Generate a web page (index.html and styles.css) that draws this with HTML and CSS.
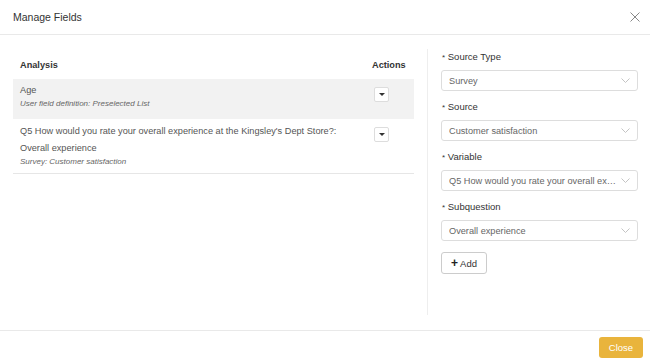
FILE: index.html
```html
<!DOCTYPE html>
<html lang="en">
<head>
    <meta charset="UTF-8">
    <meta name="viewport" content="width=device-width, initial-scale=1.0">
    <title>Manage Fields</title>
    <link rel="stylesheet" href="styles.css">
</head>
<body>
    <div class="modal">
        <div class="modal-header">
            <span class="modal-title">Manage Fields</span>
            <button class="close-x" aria-label="Close">
                <svg xmlns="http://www.w3.org/2000/svg" viewBox="0 0 10 10" width="10" height="10"><line x1="0.5" y1="0.5" x2="9.5" y2="9.5"></line><line x1="9.5" y1="0.5" x2="0.5" y2="9.5"></line></svg>
            </button>
        </div>
        <div class="modal-body">
            <div class="fields">
                <table class="fields-table">
                    <thead>
                        <tr>
                            <th>Analysis</th>
                            <th class="col-actions">Actions</th>
                        </tr>
                    </thead>
                    <tbody>
                        <tr class="active">
                            <td>
                                <div class="field-name">Age</div>
                                <div class="field-source">User field definition: Preselected List</div>
                            </td>
                            <td class="col-actions"><button class="caret-btn"><span class="caret"></span></button></td>
                        </tr>
                        <tr>
                            <td>
                                <div class="field-name">Q5 How would you rate your overall experience at the Kingsley's Dept Store?: Overall experience</div>
                                <div class="field-source">Survey: Customer satisfaction</div>
                            </td>
                            <td class="col-actions"><button class="caret-btn"><span class="caret"></span></button></td>
                        </tr>
                    </tbody>
                </table>
            </div>
            <div class="form">
                <label class="form-label"><span class="req">*</span> Source Type</label>
                <div class="select">
                    <span class="select-value">Survey</span>
                    <svg class="chevron" xmlns="http://www.w3.org/2000/svg" viewBox="0 0 9 5" width="9" height="5"><polyline points="0.5 0.5 4.5 4.5 8.5 0.5"></polyline></svg>
                </div>

                <label class="form-label"><span class="req">*</span> Source</label>
                <div class="select">
                    <span class="select-value">Customer satisfaction</span>
                    <svg class="chevron" xmlns="http://www.w3.org/2000/svg" viewBox="0 0 9 5" width="9" height="5"><polyline points="0.5 0.5 4.5 4.5 8.5 0.5"></polyline></svg>
                </div>

                <label class="form-label"><span class="req">*</span> Variable</label>
                <div class="select">
                    <span class="select-value">Q5 How would you rate your overall experience at the Kingsley's Dept Store?</span>
                    <svg class="chevron" xmlns="http://www.w3.org/2000/svg" viewBox="0 0 9 5" width="9" height="5"><polyline points="0.5 0.5 4.5 4.5 8.5 0.5"></polyline></svg>
                </div>

                <label class="form-label"><span class="req">*</span> Subquestion</label>
                <div class="select">
                    <span class="select-value">Overall experience</span>
                    <svg class="chevron" xmlns="http://www.w3.org/2000/svg" viewBox="0 0 9 5" width="9" height="5"><polyline points="0.5 0.5 4.5 4.5 8.5 0.5"></polyline></svg>
                </div>

                <div class="form-actions">
                    <button class="btn-add"><span class="plus">+</span> Add</button>
                </div>
            </div>
        </div>
        <div class="modal-footer">
            <button class="btn-close">Close</button>
        </div>
    </div>
</body>
</html>
```
FILE: styles.css
```css
body {
    margin: 0;
    font-family: "Liberation Sans", Arial, sans-serif;
    font-size: 9.2px;
    color: #555;
    background-color: #fff;
}
.modal {
    width: 650px;
    height: 364px;
    display: flex;
    flex-direction: column;
    background-color: #fff;
}
.modal-header {
    height: 35px;
    box-sizing: border-box;
    display: flex;
    align-items: center;
    justify-content: space-between;
    padding: 0 10px 0 13px;
    border-bottom: 1px solid #e9e9e9;
}
.modal-title {
    font-size: 10.5px;
    color: #333;
}
.close-x {
    background: none;
    border: none;
    padding: 0;
    width: 10px;
    height: 10px;
    display: flex;
    cursor: pointer;
}
.close-x svg {
    stroke: #888;
    stroke-width: 1;
}
.modal-body {
    flex: 1;
    display: flex;
    padding: 14px 12px 15px 13px;
}
.fields {
    flex: 0 0 401px;
    padding-top: 1px;
}
.fields-table {
    width: 100%;
    table-layout: fixed;
    border-collapse: collapse;
}
.fields-table th {
    text-align: left;
    font-weight: bold;
    color: #333;
    height: 29px;
    padding: 0 7px;
    vertical-align: middle;
}
.fields-table tbody tr {
    height: 40px;
}
.fields-table td {
    padding: 3px 7px 6px;
    vertical-align: top;
    border-bottom: 1px solid #e6e6e6;
}
.fields-table tr.active td {
    background-color: #f2f2f2;
    border-bottom-color: #fff;
}
.fields-table .col-actions {
    width: 35px;
    padding-top: 7px;
}
.fields-table tr.active .col-actions {
    padding-top: 8px;
}
.fields-table th.col-actions {
    padding-top: 0;
}
.field-name {
    line-height: 17px;
    color: #555;
}
.field-source {
    font-size: 8px;
    font-style: italic;
    line-height: 10px;
    color: #666;
}
.caret-btn {
    width: 15px;
    height: 15px;
    margin-left: 2px;
    padding: 0;
    border: 1px solid #ddd;
    border-radius: 2px;
    background-color: #fff;
    display: flex;
    align-items: center;
    justify-content: center;
}
.caret {
    width: 0;
    height: 0;
    border-left: 3px solid transparent;
    border-right: 3px solid transparent;
    border-top: 3px solid #333;
}
.form {
    flex: 1;
    min-width: 0;
    margin-left: 13px;
    padding-left: 13px;
    border-left: 1px solid #eee;
    display: flex;
    flex-direction: column;
}
.form-label {
    line-height: 16px;
    font-size: 9.5px;
    color: #333;
    margin-bottom: 4px;
}
.req {
    font-size: 8px;
    margin-left: 1px;
}
.select {
    height: 21px;
    box-sizing: border-box;
    border: 1px solid #ddd;
    border-radius: 3px;
    display: flex;
    align-items: center;
    padding: 0 7px 0 7px;
    margin-bottom: 8px;
}
.select-value {
    flex: 1;
    min-width: 0;
    white-space: nowrap;
    overflow: hidden;
    text-overflow: ellipsis;
    color: #666;
}
.chevron {
    flex: none;
    margin-left: 4px;
    fill: none;
    stroke: #c4c4c4;
    stroke-width: 1;
}
.form-actions {
    margin-top: 3px;
}
.btn-add {
    width: 46px;
    height: 22px;
    border: 1px solid #ccc;
    border-radius: 3px;
    background-color: #fff;
    font-family: inherit;
    font-size: 9.5px;
    color: #333;
    padding: 0;
}
.plus {
    font-weight: bold;
    font-size: 12px;
    color: #222;
}
.modal-footer {
    height: 34px;
    box-sizing: border-box;
    border-top: 1px solid #e9e9e9;
    display: flex;
    align-items: center;
    justify-content: flex-end;
    padding: 0 7px 0 0;
}
.btn-close {
    width: 44px;
    height: 21px;
    border: none;
    border-radius: 3px;
    background-color: #e9b43c;
    color: #fff;
    font-family: inherit;
    font-size: 9.5px;
    padding: 0;
}
```
